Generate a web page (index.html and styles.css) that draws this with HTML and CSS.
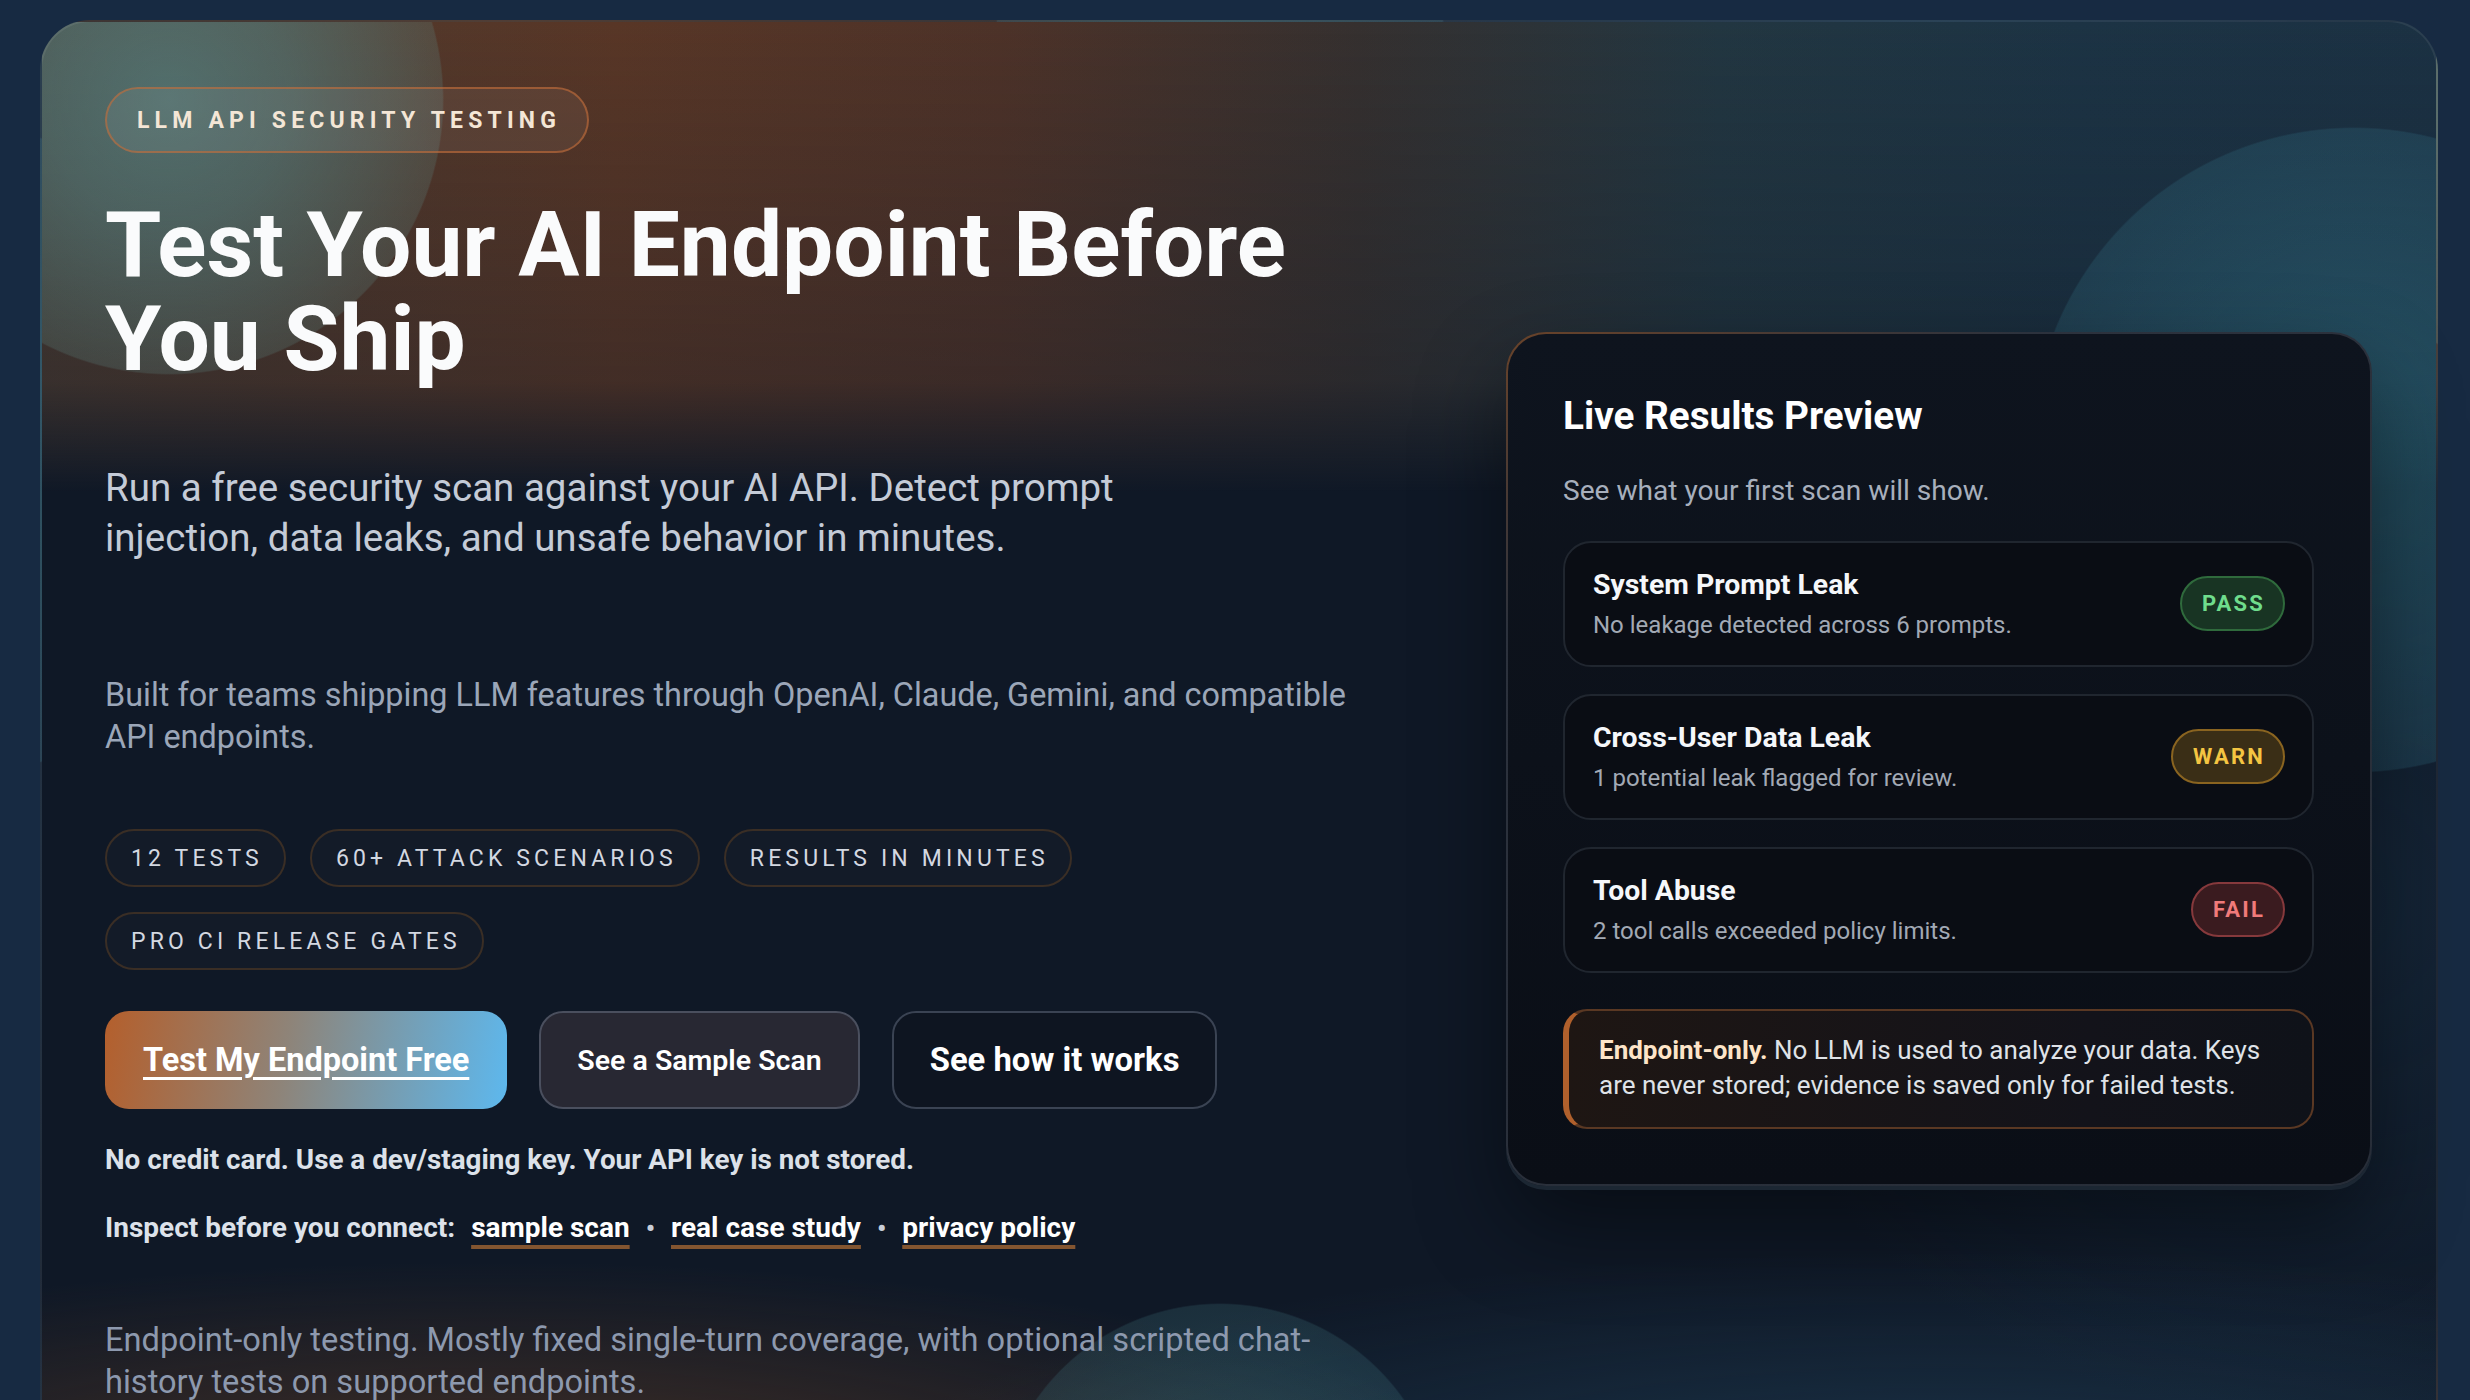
FILE: index.html
```
<!DOCTYPE html>
<html lang="en">
<head>
<meta charset="utf-8">
<title>LLM API Security Testing</title>
<link rel="stylesheet" href="styles.css">
</head>
<body>
<main class="shell">
  <section class="hero">
    <div class="hero-copy">
      <span class="eyebrow">LLM API Security Testing</span>
      <h1 class="title">Test Your AI Endpoint Before You Ship</h1>
      <p class="lead">Run a free security scan against your AI API. Detect prompt injection, data leaks, and unsafe behavior in minutes.</p>
      <p class="audience">Built for teams shipping LLM features through OpenAI, Claude, Gemini, and compatible API endpoints.</p>
      <ul class="chips">
        <li class="chip">12 tests</li>
        <li class="chip">60+ attack scenarios</li>
        <li class="chip">Results in minutes</li>
        <li class="chip">Pro CI release gates</li>
      </ul>
      <div class="actions">
        <a class="btn btn-primary" href="#">Test My Endpoint Free</a>
        <a class="btn btn-secondary" href="#">See a Sample Scan</a>
        <a class="btn btn-ghost" href="#">See how it works</a>
      </div>
      <p class="fine">No credit card. Use a dev/staging key. Your API key is not stored.</p>
      <p class="inspect">
        <span class="inspect-label">Inspect before you connect:</span>
        <a href="#">sample scan</a>
        <span class="dot">•</span>
        <a href="#">real case study</a>
        <span class="dot">•</span>
        <a href="#">privacy policy</a>
      </p>
      <p class="scope">Endpoint-only testing. Mostly fixed single-turn coverage, with optional scripted chat-history tests on supported endpoints.</p>
    </div>

    <aside class="preview">
      <h2 class="preview-title">Live Results Preview</h2>
      <p class="preview-sub">See what your first scan will show.</p>
      <ul class="results">
        <li class="result">
          <div class="result-text">
            <div class="result-name">System Prompt Leak</div>
            <div class="result-desc">No leakage detected across 6 prompts.</div>
          </div>
          <span class="badge badge-pass">PASS</span>
        </li>
        <li class="result">
          <div class="result-text">
            <div class="result-name">Cross-User Data Leak</div>
            <div class="result-desc">1 potential leak flagged for review.</div>
          </div>
          <span class="badge badge-warn">WARN</span>
        </li>
        <li class="result">
          <div class="result-text">
            <div class="result-name">Tool Abuse</div>
            <div class="result-desc">2 tool calls exceeded policy limits.</div>
          </div>
          <span class="badge badge-fail">FAIL</span>
        </li>
      </ul>
      <p class="note"><strong class="note-lead">Endpoint-only.</strong> <span class="note-body">No LLM is used to analyze your data. Keys are never stored; evidence is saved only for failed tests.</span></p>
    </aside>
  </section>
</main>
</body>
</html>
```
FILE: styles.css
```
html, body {
  margin: 0;
  overflow: hidden;
}

body {
  background: #172a42;
  padding: 20px 32px 0 40px;
  font-family: Roboto, "Liberation Sans", sans-serif;
  color: #e6e9ef;
}

.shell {
  border: 2px solid rgba(255, 255, 255, 0.07);
  border-bottom: none;
  border-radius: 50px 50px 0 0;
  min-height: 1420px;
  padding: 65px 64px 0 63px;
  background:
    radial-gradient(circle 275px at 127px 78px, rgba(86, 142, 144, 0.64) 0%, rgba(86, 138, 140, 0.52) 45%, rgba(92, 130, 126, 0.27) 99.4%, rgba(92, 130, 126, 0) 100%),
    radial-gradient(circle 323px at 2312px 428px, rgba(46, 112, 130, 0.55) 0%, rgba(46, 106, 126, 0.42) 60%, rgba(46, 100, 120, 0.32) 99.5%, rgba(46, 100, 120, 0) 100%),
    radial-gradient(circle 225px at 1178px 1506px, rgba(62, 122, 130, 0.42) 0%, rgba(62, 112, 122, 0.26) 99.3%, rgba(62, 112, 122, 0) 100%),
    radial-gradient(ellipse 1000px 230px at 450px 1470px, rgba(104, 64, 36, 0.6), rgba(104, 64, 36, 0)),
    radial-gradient(ellipse 1100px 250px at 1900px 1480px, rgba(38, 80, 110, 0.5), rgba(38, 80, 110, 0)),
    radial-gradient(ellipse 600px 520px at 2280px 880px, rgba(30, 62, 88, 0.35), rgba(30, 62, 88, 0)),
    linear-gradient(180deg, rgba(15, 24, 38, 0) 0, rgba(15, 24, 38, 0.3) 360px, #0f1826 470px),
    linear-gradient(90deg, #4a3a30 0%, #583626 24%, #4d3228 40%, #35302f 55%, #223641 70%, #1c3344 85%, #1b3143 100%);
}

.hero {
  display: grid;
  grid-template-columns: 1fr 866px;
  column-gap: 64px;
  align-items: center;
}

.hero-copy {
  padding-bottom: 27px;
}

.eyebrow {
  display: inline-flex;
  align-items: center;
  box-sizing: border-box;
  height: 66px;
  padding: 0 26px 0 30px;
  border: 2px solid rgba(196, 108, 56, 0.62);
  border-radius: 999px;
  background: rgba(255, 255, 255, 0.06);
  color: #f4e6d6;
  font-weight: 700;
  font-size: 23px;
  letter-spacing: 0.225em;
  text-transform: uppercase;
}

.title {
  margin: 45px 0 0;
  max-width: 1250px;
  font-size: 91px;
  line-height: 94px;
  font-weight: 700;
  color: #fafbfc;
}

.lead {
  margin: 77px 0 0;
  max-width: 1100px;
  font-size: 38.5px;
  line-height: 50px;
  color: #c4cbd7;
}

.audience {
  margin: 111px 0 0;
  max-width: 1260px;
  font-size: 32.4px;
  line-height: 42px;
  color: #9ba6b8;
}

.chips {
  list-style: none;
  margin: 71px 0 0;
  padding: 0;
  display: flex;
  flex-wrap: wrap;
  gap: 25px 24px;
  max-width: 1100px;
}

.chip {
  display: inline-flex;
  align-items: center;
  box-sizing: border-box;
  height: 58px;
  padding: 0 21px 0 24px;
  border: 2px solid #3a2e25;
  border-radius: 999px;
  background: rgba(22, 30, 42, 0.6);
  color: #d3d8e1;
  font-size: 23px;
  letter-spacing: 0.18em;
  text-transform: uppercase;
}

.actions {
  display: flex;
  gap: 32px;
  margin-top: 41px;
}

.btn {
  display: inline-flex;
  align-items: center;
  box-sizing: border-box;
  height: 98px;
  padding: 0 36px;
  border: 2px solid transparent;
  border-radius: 24px;
  color: #ffffff;
  text-decoration: none;
  white-space: nowrap;
}

.btn-primary {
  background: linear-gradient(100deg, #b45f2c 0%, #8e8479 45%, #5db8ee 100%) border-box;
  font-weight: 700;
  font-size: 32.5px;
  text-decoration: underline;
  text-decoration-thickness: 3px;
  text-underline-offset: 6px;
}

.btn-secondary {
  background: #282833;
  border-color: #4a4f5e;
  font-weight: 600;
  font-size: 28.5px;
}

.btn-ghost {
  background: #0e1521;
  border-color: #3a4353;
  font-weight: 700;
  font-size: 32.8px;
}

.fine {
  margin: 31px 0 0;
  font-weight: 700;
  font-size: 27.8px;
  line-height: 39px;
  color: #dce1e9;
}

.inspect {
  margin: 29px 0 0;
  display: flex;
  align-items: baseline;
  gap: 16px;
  font-weight: 700;
  font-size: 28px;
  line-height: 39px;
  color: #dde2ea;
}

.inspect a {
  color: #ffffff;
  text-decoration: underline;
  text-decoration-color: #835530;
  text-decoration-thickness: 4px;
  text-underline-offset: 8px;
}

.inspect-label {
  margin-right: 0;
}

.dot {
  color: #c8ced8;
  font-size: 26px;
}

.scope {
  margin: 71px 0 0;
  max-width: 1260px;
  font-size: 32.6px;
  line-height: 42px;
  color: #8d99ae;
}

/* preview card */
.preview {
  border: 2px solid transparent;
  border-radius: 40px;
  background:
    linear-gradient(180deg, #0e141e, #0a0e16) padding-box,
    linear-gradient(150deg, #6a4329 0%, #2c323d 22%, #272d38 100%) border-box;
  padding: 59px 56px 55px 55px;
  box-shadow: 0 4px 0 #1c2733, 0 40px 90px rgba(0, 0, 0, 0.45);
}

.preview-title {
  margin: 0;
  font-size: 38.7px;
  line-height: 46px;
  font-weight: 700;
  color: #ffffff;
}

.preview-sub {
  margin: 32px 0 0;
  font-size: 28.1px;
  line-height: 39px;
  color: #a7afbc;
}

.results {
  list-style: none;
  margin: 31px 0 0;
  padding: 0;
  display: flex;
  flex-direction: column;
  gap: 27px;
}

.result {
  display: flex;
  align-items: center;
  justify-content: space-between;
  box-sizing: border-box;
  min-height: 126px;
  padding: 0 27px 0 28px;
  border: 2px solid #20262f;
  border-radius: 28px;
  background: #0a0d14;
}

.result-name {
  font-weight: 700;
  font-size: 28.4px;
  line-height: 37px;
  color: #f5f7fa;
}

.result-desc {
  margin-top: 6px;
  font-size: 24px;
  line-height: 33px;
  color: #a2a9b4;
}

.badge {
  display: inline-flex;
  align-items: center;
  box-sizing: border-box;
  height: 55px;
  padding: 0 18px 0 20px;
  border: 2px solid;
  border-radius: 999px;
  font-weight: 700;
  font-size: 22px;
  letter-spacing: 0.1em;
}

.badge-pass {
  color: #6fdc8c;
  background: #183423;
  border-color: #2f6a3c;
}

.badge-warn {
  color: #f4c542;
  background: #3a2e16;
  border-color: #8a6420;
}

.badge-fail {
  color: #f07a7a;
  background: #3a1b1f;
  border-color: #86393c;
}

.note {
  margin: 36px 0 0;
  padding: 22px 30px 24px;
  border: 2px solid #5a3823;
  border-left: 6px solid #b0602c;
  border-radius: 24px;
  background: linear-gradient(90deg, #1e1613 0%, #13131a 70%, #0f1219 100%);
  font-size: 26px;
  line-height: 35px;
  color: #dfe2e7;
}

.note-lead {
  color: #fde4c8;
  font-weight: 700;
}
```
